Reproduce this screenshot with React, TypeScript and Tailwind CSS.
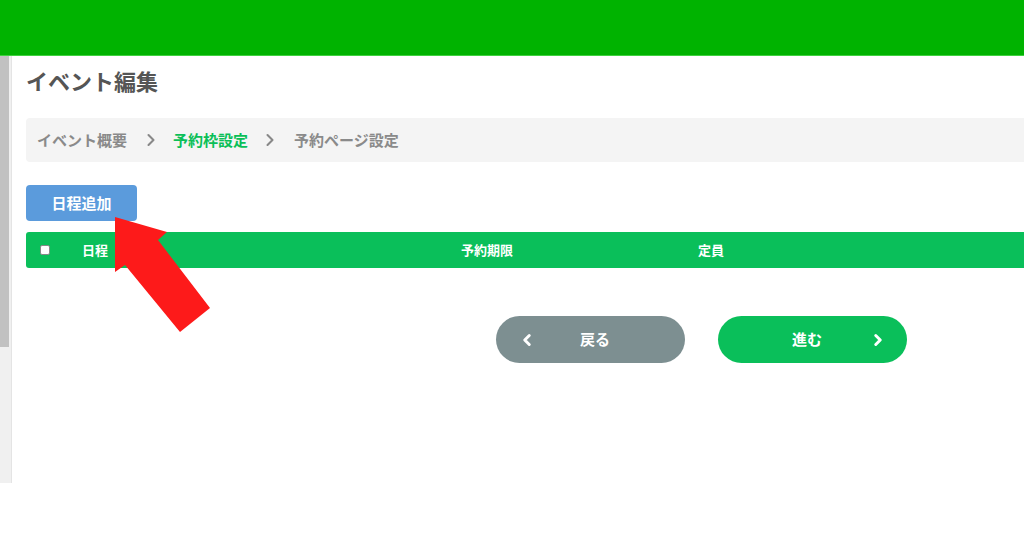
import { ChevronLeft, ChevronRight } from 'lucide-react';

const font = { fontFamily: '"Noto Sans CJK JP", "Noto Sans", sans-serif' };

export default function App() {
  return (
    <div className="relative w-[1024px] h-[538px] bg-white overflow-hidden" style={font}>
      {/* Top bar */}
      <div className="h-[56px] bg-[#00b300] border-b border-[#3fd13f]" />

      <div className="flex">
        {/* Scrollbar */}
        <div className="w-[12px] h-[427px] bg-[#f0f0f0] border-r border-[#e4e4e4]">
          <div className="w-[9px] h-[291px] bg-[#c1c1c1]" />
        </div>

        {/* Content */}
        <div className="flex-1 pl-[14px] pt-[8px]">
          <h1 className="text-[22px] leading-[32px] font-bold text-[#555]">イベント編集</h1>

          <div className="mt-[22px] h-[44px] bg-[#f4f4f4] rounded-l-[4px] flex items-center pl-[11px] text-[15px] font-bold text-[#8a8a8a]">
            <span>イベント概要</span>
            <ChevronRight className="w-[20px] h-[20px] ml-[14px] mr-[12px] text-[#888]" strokeWidth={2.5} />
            <span className="text-[#0bbf58]">予約枠設定</span>
            <ChevronRight className="w-[20px] h-[20px] ml-[12px] mr-[14px] text-[#888]" strokeWidth={2.5} />
            <span>予約ページ設定</span>
          </div>

          <button className="mt-[23px] w-[111px] h-[36px] bg-[#5b9bdc] rounded-[4px] text-white text-[15px] font-bold">
            日程追加
          </button>

          <div className="mt-[11px] h-[36px] bg-[#0abf5a] rounded-l-[3px] flex items-center text-white text-[13px] font-bold">
            <span className="ml-[14px] w-[10px] h-[10px] bg-white border border-[#888] rounded-[2px]" />
            <span className="ml-[32px] w-[379px]">日程</span>
            <span className="w-[237px]">予約期限</span>
            <span>定員</span>
          </div>

          <div className="mt-[48px] flex pl-[470px] gap-[33px]">
            <button className="w-[189px] h-[47px] rounded-full bg-[#7d8f91] text-white text-[15px] font-bold flex items-center pl-[22px]">
              <ChevronLeft className="w-[18px] h-[18px]" strokeWidth={4} />
              <span className="ml-[44px]">戻る</span>
            </button>
            <button className="w-[189px] h-[47px] rounded-full bg-[#0abf5a] text-white text-[15px] font-bold flex items-center pl-[74px]">
              <span>進む</span>
              <ChevronRight className="w-[18px] h-[18px] ml-[47px]" strokeWidth={4} />
            </button>
          </div>
        </div>
      </div>

      {/* Red arrow annotation */}
      <svg className="absolute left-0 top-0 pointer-events-none" width="1024" height="538">
        <polygon
          points="115,217 167,232 158,240 210,308 180,332 125,265 115,272"
          fill="#fd1a1a"
        />
      </svg>
    </div>
  );
}
